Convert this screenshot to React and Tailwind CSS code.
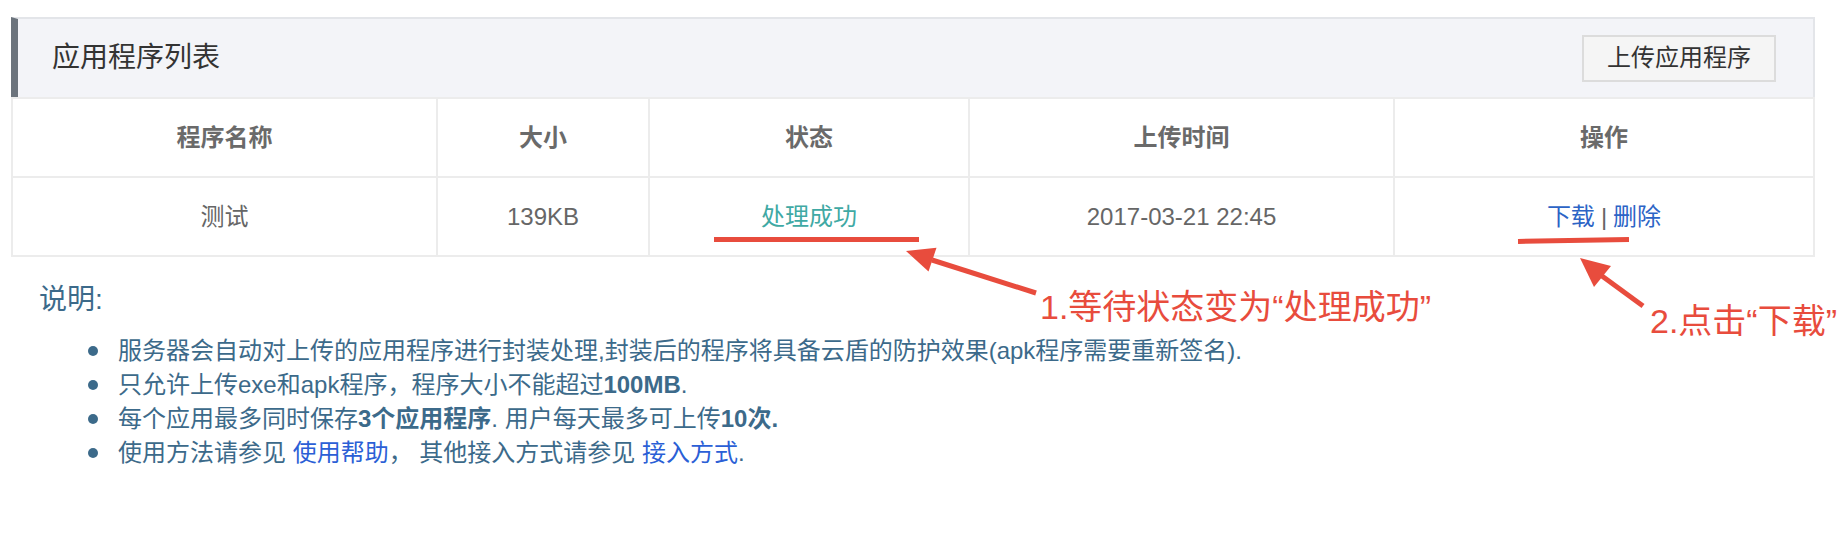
import React from 'react';

const font = "font-['Liberation_Sans','Noto_Sans_CJK_SC',sans-serif]";

const headers = ['程序名称', '大小', '状态', '上传时间', '操作'];

function App() {
  return (
    <div className={`relative w-[1846px] h-[538px] bg-white overflow-hidden ${font}`}>
      {/* Panel */}
      <div className="ml-[11px] mt-[17px] w-[1804px]">
        <div className="flex items-center justify-between h-[80px] bg-[#f3f4f8] border-t-2 border-r-2 border-[#e3e5e9] border-l-[7px] border-l-[#6b737c] pl-[34px] pr-[37px]">
          <h2 className="text-[28px] leading-[36px] text-[#333]">应用程序列表</h2>
          <button className="w-[194px] h-[47px] bg-[#f5f5f5] border-2 border-[#dcdcdc] text-[24px] text-[#333] leading-none">
            上传应用程序
          </button>
        </div>

        {/* Table */}
        <div className="grid grid-cols-[425px_212px_320px_425px_420px] border-l-2 border-t-2 border-[#ececec]">
          {headers.map((h) => (
            <div key={h} className="h-[79px] flex items-center justify-center border-r-2 border-b-2 border-[#ececec] text-[24px] font-bold text-[#6a6a6a]">
              {h}
            </div>
          ))}
          <div className="h-[79px] flex items-center justify-center border-r-2 border-b-2 border-[#ececec] text-[24px] text-[#666]">测试</div>
          <div className="h-[79px] flex items-center justify-center border-r-2 border-b-2 border-[#ececec] text-[24px] text-[#666]">139KB</div>
          <div className="h-[79px] flex items-center justify-center border-r-2 border-b-2 border-[#ececec] text-[24px] text-[#3fa9a4]">处理成功</div>
          <div className="h-[79px] flex items-center justify-center border-r-2 border-b-2 border-[#ececec] text-[24px] text-[#666]">2017-03-21 22:45</div>
          <div className="h-[79px] flex items-center justify-center border-r-2 border-b-2 border-[#ececec] text-[24px] text-[#666]">
            <a className="text-[#2c64c6]">下载</a>
            <span className="mx-[6px]">|</span>
            <a className="text-[#2c64c6]">删除</a>
          </div>
        </div>
      </div>

      {/* Notes */}
      <div className="ml-[39px] mt-[25px] text-[#3c6a8a]">
        <div className="text-[28px] leading-[36px]">说明:</div>
        <ul className="mt-[16px] ml-[49px] text-[24px] leading-[34px]">
          <li className="flex items-center gap-[20px]">
            <span className="w-[10px] h-[10px] rounded-full bg-[#3c6a8a]" />
            <span>服务器会自动对上传的应用程序进行封装处理,封装后的程序将具备云盾的防护效果(apk程序需要重新签名).</span>
          </li>
          <li className="flex items-center gap-[20px]">
            <span className="w-[10px] h-[10px] rounded-full bg-[#3c6a8a]" />
            <span>只允许上传exe和apk程序，程序大小不能超过<b>100MB</b>.</span>
          </li>
          <li className="flex items-center gap-[20px]">
            <span className="w-[10px] h-[10px] rounded-full bg-[#3c6a8a]" />
            <span>每个应用最多同时保存<b>3个应用程序</b>. 用户每天最多可上传<b>10次.</b></span>
          </li>
          <li className="flex items-center gap-[20px]">
            <span className="w-[10px] h-[10px] rounded-full bg-[#3c6a8a]" />
            <span>
              使用方法请参见 <a className="text-[#2b5fd6]">使用帮助</a>， 其他接入方式请参见 <a className="text-[#2b5fd6]">接入方式</a>.
            </span>
          </li>
        </ul>
      </div>

      {/* Annotations */}
      <div className="absolute left-[714px] top-[237px] w-[205px] h-[5px] bg-[#e84c3d]" />
      <div className="absolute left-[1518px] top-[238px] w-[111px] h-[5px] bg-[#e84c3d] -rotate-1" />
      <svg className="absolute inset-0 pointer-events-none" width="1846" height="538">
        <line x1="1036" y1="293" x2="932" y2="260" stroke="#e84c3d" strokeWidth="5" />
        <polygon points="906,251 936.5,247.8 928.5,271.5" fill="#e84c3d" />
        <line x1="1643" y1="306" x2="1602" y2="276" stroke="#e84c3d" strokeWidth="5" />
        <polygon points="1580,258 1611,266 1594,287" fill="#e84c3d" />
      </svg>
      <div className="absolute left-[1040px] top-[287px] text-[34px] leading-[40px] text-[#e84c3d] whitespace-nowrap">
        1.等待状态变为“处理成功”
      </div>
      <div className="absolute left-[1650px] top-[301px] text-[34px] leading-[40px] text-[#e84c3d] whitespace-nowrap">
        2.点击“下载”
      </div>
    </div>
  );
}

export default App;
